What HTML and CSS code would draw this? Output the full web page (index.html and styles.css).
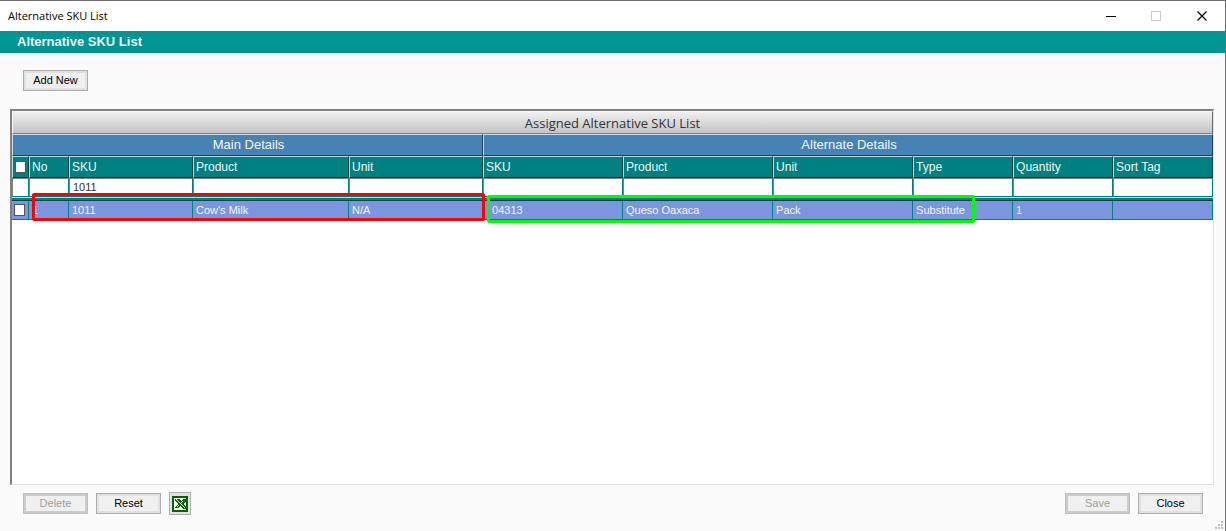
FILE: index.html
```html
<!DOCTYPE html>
<html lang="en">
<head>
    <meta charset="UTF-8">
    <meta name="viewport" content="width=device-width, initial-scale=1.0">
    <title>Alternative SKU List</title>
    <link rel="stylesheet" href="styles.css">
</head>
<body>
    <div class="window">
        <div class="titlebar">
            <span class="title">Alternative SKU List</span>
            <div class="window-buttons">
                <button type="button" aria-label="Minimize">
                    <svg width="11" height="11" shape-rendering="crispEdges"><path d="M1 5.5H11" stroke="#000"/></svg>
                </button>
                <button type="button" aria-label="Maximize" disabled>
                    <svg width="11" height="11" shape-rendering="crispEdges"><rect x="0.5" y="0.5" width="9" height="9" fill="none" stroke="#ccc"/></svg>
                </button>
                <button type="button" aria-label="Close window">
                    <svg width="11" height="11"><path d="M0.5 0.5L9.5 9.5M9.5 0.5L0.5 9.5" fill="none" stroke="#000" stroke-width="1.2"/></svg>
                </button>
            </div>
        </div>
        <h1 class="banner">Alternative SKU List</h1>

        <div class="content">
            <div class="toolbar">
                <button type="button" class="btn">Add New</button>
            </div>

            <div class="grid">
                <table class="sku-table">
                    <caption>Assigned Alternative SKU List</caption>
                    <colgroup>
                        <col class="col-check">
                        <col class="col-no">
                        <col class="col-sku">
                        <col class="col-product">
                        <col class="col-unit">
                        <col class="col-alt-sku">
                        <col class="col-alt-product">
                        <col class="col-alt-unit">
                        <col class="col-type">
                        <col class="col-quantity">
                        <col class="col-sort">
                    </colgroup>
                    <thead>
                        <tr class="groups">
                            <th colspan="5">Main Details</th>
                            <th colspan="6">Alternate Details</th>
                        </tr>
                        <tr class="columns">
                            <th class="check"><input type="checkbox" aria-label="Select all"></th>
                            <th>No</th>
                            <th>SKU</th>
                            <th>Product</th>
                            <th>Unit</th>
                            <th>SKU</th>
                            <th>Product</th>
                            <th>Unit</th>
                            <th>Type</th>
                            <th>Quantity</th>
                            <th>Sort Tag</th>
                        </tr>
                        <tr class="filters">
                            <td></td>
                            <td><input type="text" aria-label="Filter No"></td>
                            <td><input type="text" aria-label="Filter SKU" value="1011"></td>
                            <td><input type="text" aria-label="Filter Product"></td>
                            <td><input type="text" aria-label="Filter Unit"></td>
                            <td><input type="text" aria-label="Filter alternate SKU"></td>
                            <td><input type="text" aria-label="Filter alternate Product"></td>
                            <td><input type="text" aria-label="Filter alternate Unit"></td>
                            <td><input type="text" aria-label="Filter Type"></td>
                            <td><input type="text" aria-label="Filter Quantity"></td>
                            <td><input type="text" aria-label="Filter Sort Tag"></td>
                        </tr>
                        <tr class="divider"><td colspan="11"></td></tr>
                    </thead>
                    <tbody>
                        <tr>
                            <td class="check"><input type="checkbox" aria-label="Select row 1"></td>
                            <td>1</td>
                            <td>1011</td>
                            <td>Cow's Milk</td>
                            <td>N/A</td>
                            <td class="alt-sku">04313</td>
                            <td>Queso Oaxaca</td>
                            <td>Pack</td>
                            <td>Substitute</td>
                            <td>1</td>
                            <td></td>
                        </tr>
                    </tbody>
                </table>
                <div class="mark mark-main"></div>
                <div class="mark mark-alternate"></div>
            </div>

            <div class="footer">
                <button type="button" class="btn" disabled>Delete</button>
                <button type="button" class="btn">Reset</button>
                <button type="button" class="btn-excel" aria-label="Export to Excel">
                    <svg width="16" height="16" shape-rendering="crispEdges">
                        <rect width="16" height="16" fill="#006400"/>
                        <rect x="2" y="2" width="12" height="12" fill="#fff"/>
                        <path d="M3 3h4l2 2 2-2h3v2l-3 3 3 3v2h-3l-3-3-2 2H3v-1l3-3-3-3z" fill="#006400"/>
                        <path d="M3 3h2v1h1v1h1v1h1v1h1v1h1v1h1v1h1v1h1v1h-1v-1h-1v-1h-1v-1h-1v-1h-1v-1h-1v-1h-1v-1h-1v-1h-1v-1h-1z" fill="#fff"/>
                        <path d="M9 6h1v-1h1v1h-1v1h-1zM5 10h1v-1h1v1h-1v1h-1z" fill="#fff"/>
                    </svg>
                </button>
                <button type="button" class="btn save" disabled>Save</button>
                <button type="button" class="btn">Close</button>
            </div>
        </div>

        <svg class="grip" width="8" height="8" fill="#bfbfbf" shape-rendering="crispEdges">
            <path d="M6 0h2v2h-2zM3 3h2v2h-2zM6 3h2v2h-2zM0 6h2v2h-2zM3 6h2v2h-2zM6 6h2v2h-2z"/>
        </svg>
    </div>
</body>
</html>
```
FILE: styles.css
```css
* {
  box-sizing: border-box;
}

body {
  margin: 0;
  font-family: "Liberation Sans", Arial, sans-serif;
  font-size: 11px;
  color: #000;
}

button,
input {
  font: inherit;
  margin: 0;
}

.window {
  position: relative;
  display: flex;
  flex-direction: column;
  min-height: 100vh;
  background-color: #fbfbfb;
  border-top: 1px solid #6e6c6e;
  border-right: 1px solid #6a706e;
}

.titlebar {
  display: flex;
  justify-content: space-between;
  align-items: center;
  height: 30px;
  padding-left: 8px;
  background-color: #fff;
}

.title {
  font-family: "Open Sans", sans-serif;
  font-size: 11px;
  line-height: 14px;
}

.window-buttons {
  display: flex;
}

.window-buttons button {
  display: flex;
  justify-content: center;
  align-items: center;
  width: 46px;
  height: 28px;
  padding: 0;
  border: none;
  background: none;
}

.banner {
  margin: 0;
  padding-left: 17px;
  font-size: 13px;
  line-height: 22px;
  color: #e8f8f4;
  background-color: #009494;
}

.content {
  flex: 1;
  display: flex;
  flex-direction: column;
  padding: 17px 11px 16px 10px;
}

.toolbar {
  padding: 0 13px 18px;
}

.btn {
  display: block;
  width: 65px;
  height: 21px;
  padding: 0;
  border: 1px solid #adadad;
  background-color: #f0f0f0;
  box-shadow: inset 0 0 0 2px #e1e1e1;
  line-height: 17px;
  color: #000;
}

.btn:disabled {
  border-color: #bfbfbf;
  box-shadow: inset 0 0 0 2px #ccc;
  color: #a0a0a0;
}

/* Sunken grid frame */
.grid {
  position: relative;
  flex: 1;
  background-color: #fff;
  border: 2px solid #696969;
  border-top-color: #808080;
  border-left-color: #808080;
  border-right: 1px solid #e3e3e3;
  border-bottom: 1px solid #e3e3e3;
}

.sku-table {
  width: 100%;
  table-layout: fixed;
  border-collapse: separate;
  border-spacing: 0;
}

.col-check { width: 17px; }
.col-no { width: 40px; }
.col-sku { width: 124px; }
.col-product { width: 156px; }
.col-unit { width: 134px; }
.col-alt-sku { width: 140px; }
.col-alt-product { width: 150px; }
.col-alt-unit { width: 140px; }
.col-type { width: 100px; }
.col-quantity { width: 100px; }

.sku-table caption {
  height: 23px;
  border: 1px solid #f8f8f8;
  border-right-color: #696969;
  border-bottom-color: #808080;
  background: linear-gradient(#f0f0f0, #c4c4c4);
  font-family: "Open Sans", sans-serif;
  font-size: 13px;
  line-height: 22px;
  color: #333;
}

.sku-table th,
.sku-table td {
  padding: 0 0 0 2px;
  text-align: left;
  font-weight: normal;
  white-space: nowrap;
  overflow: hidden;
}

.groups th {
  height: 22px;
  border: 1px solid #c8dcec;
  border-right-color: #1c3c5c;
  border-bottom-color: #1c3c5c;
  background-color: #4682b4;
  font-size: 13px;
  line-height: 20px;
  color: #f4f8fc;
}

.sku-table .groups th {
  text-align: center;
}

.columns th {
  height: 22px;
  border: 1px solid #b4dcdc;
  border-right-color: #004040;
  border-bottom-color: #004040;
  background-color: #008080;
  font-size: 12px;
  line-height: 20px;
  color: #f0f8f8;
}

.sku-table .filters td {
  height: 19px;
  padding: 0;
  border: 1px solid #808080;
  border-right-color: #008080;
  border-bottom-color: #008080;
  background-color: #fff;
  vertical-align: top;
}

.filters input {
  display: block;
  width: 100%;
  height: 16px;
  padding: 0 3px;
  border: none;
  outline: none;
  background: none;
  color: #333;
}

.divider td {
  height: 4px;
  border-top: 1px solid #b4dcdc;
  border-bottom: 1px solid #004040;
  background-color: #008080;
}

.sku-table tbody td {
  height: 19px;
  padding-left: 3px;
  border-right: 1px solid #008080;
  border-bottom: 1px solid #008080;
  background-color: #7b96df;
  line-height: 18px;
  color: #f4f6fe;
}

.sku-table tbody .alt-sku {
  padding-left: 9px;
}

.check input {
  appearance: none;
  display: block;
  width: 11px;
  height: 12px;
  border: 1px solid #555;
  background-color: #fff;
}

.sku-table tbody .check {
  padding-left: 2px;
}

/* Highlight frames drawn over the selected row */
.mark {
  position: absolute;
  height: 28px;
  border: 3px solid;
  border-radius: 2px;
}

.mark-main {
  top: 82px;
  left: 20px;
  width: 453px;
  border-color: #f00;
}

.mark-alternate {
  top: 84px;
  left: 475px;
  width: 488px;
  border-color: #0f0;
}

.footer {
  display: flex;
  align-items: center;
  gap: 8px;
  padding: 7px 11px 0 13px;
}

.btn-excel {
  display: flex;
  justify-content: center;
  align-items: center;
  width: 22px;
  height: 23px;
  padding: 0;
  border: 1px solid #adadad;
  background-color: #e1e1e1;
}

.save {
  margin-left: auto;
}

.grip {
  position: absolute;
  right: 2px;
  bottom: 2px;
}
```
